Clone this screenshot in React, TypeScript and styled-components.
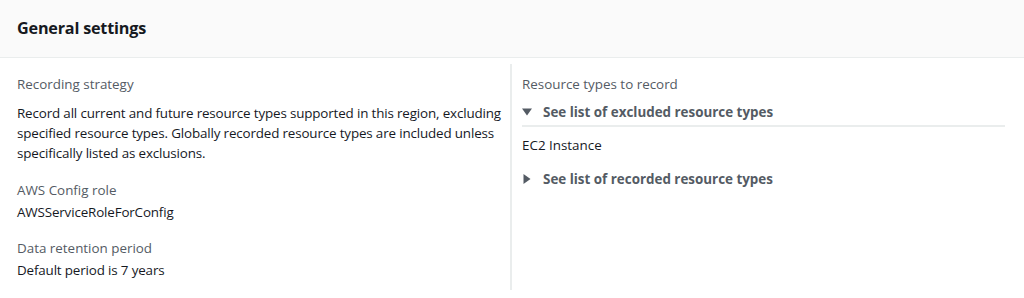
import * as React from 'react';
import styled, { createGlobalStyle } from 'styled-components';

const TEXT_COLOR = '#16191f';
const LABEL_COLOR = '#545b64';
const BORDER_COLOR = '#eaeded';

const GlobalStyle = createGlobalStyle`
	body {
		margin: 0;
		background: #ffffff;
		font-family: 'Open Sans', 'Noto Sans', sans-serif;
		color: ${TEXT_COLOR};
	}
`;

const Panel = styled.section`
	width: 1024px;
	height: 298px;
	overflow: hidden;
	background: #ffffff;
`;

const Header = styled.header`
	height: 58px;
	display: flex;
	align-items: center;
	padding: 0 17px 2px;
	box-sizing: border-box;
	background: #fafafa;
	border-bottom: 1px solid ${BORDER_COLOR};
`;

const Title = styled.h2`
	margin: 0;
	font-size: 16.2px;
	font-weight: 700;
	letter-spacing: -0.2px;
	color: ${TEXT_COLOR};
`;

const Columns = styled.div`
	display: grid;
	grid-template-columns: 493px 1fr;
	align-items: stretch;
	padding: 6px 19px 0 17px;
	height: 226px;
`;

const Column = styled.div<{ $divided?: boolean }>`
	display: flex;
	flex-direction: column;
	padding: 10px 0 0 ${(p) => (p.$divided ? '10px' : '0')};
	border-left: ${(p) => (p.$divided ? `2px solid ${BORDER_COLOR}` : 'none')};
`;

const Field = styled.div<{ $space: number }>`
	display: flex;
	flex-direction: column;
	margin-bottom: ${(p) => p.$space}px;
`;

const Label = styled.div<{ $gap?: number }>`
	font-size: 13.4px;
	line-height: 20px;
	color: ${LABEL_COLOR};
	margin-bottom: ${(p) => p.$gap ?? 2}px;
`;

const Value = styled.div`
	font-size: 13.4px;
	line-height: 20px;
	letter-spacing: -0.15px;
	color: ${TEXT_COLOR};
	max-width: 493px;
`;

const Expander = styled.div<{ $open?: boolean }>`
	display: flex;
	align-items: center;
	gap: 11px;
	font-size: 13.4px;
	line-height: 20px;
	font-weight: 700;
	color: ${LABEL_COLOR};
	padding: 1px 0 3px;
	border-bottom: ${(p) => (p.$open ? `2px solid ${BORDER_COLOR}` : 'none')};
`;

const Caret = styled.svg`
	width: 10px;
	height: 10px;
	fill: ${LABEL_COLOR};
`;

const ExpandedBody = styled.div`
	font-size: 13.4px;
	line-height: 20px;
	padding: 8px 0 13px;
`;

const ArrowDown = () => (
	<Caret viewBox="0 0 10 10">
		<polygon points="0,1.5 10,1.5 5,8.5" />
	</Caret>
);

const ArrowRight = () => (
	<Caret viewBox="0 0 10 10">
		<polygon points="1.5,0 8.5,5 1.5,10" />
	</Caret>
);

export default function App() {
	return (
		<Panel>
			<GlobalStyle />
			<Header>
				<Title>General settings</Title>
			</Header>
			<Columns>
				<Column>
					<Field $space={17}>
						<Label $gap={9}>Recording strategy</Label>
						<Value>
							Record all current and future resource types supported in this region, excluding
							specified resource types. Globally recorded resource types are included unless
							specifically listed as exclusions.
						</Value>
					</Field>
					<Field $space={16}>
						<Label>AWS Config role</Label>
						<Value>AWSServiceRoleForConfig</Value>
					</Field>
					<Field $space={0}>
						<Label>Data retention period</Label>
						<Value>Default period is 7 years</Value>
					</Field>
				</Column>
				<Column $divided>
					<Label $gap={7}>Resource types to record</Label>
					<Expander $open>
						<ArrowDown />
						See list of excluded resource types
					</Expander>
					<ExpandedBody>EC2 Instance</ExpandedBody>
					<Expander>
						<ArrowRight />
						See list of recorded resource types
					</Expander>
				</Column>
			</Columns>
		</Panel>
	);
}
